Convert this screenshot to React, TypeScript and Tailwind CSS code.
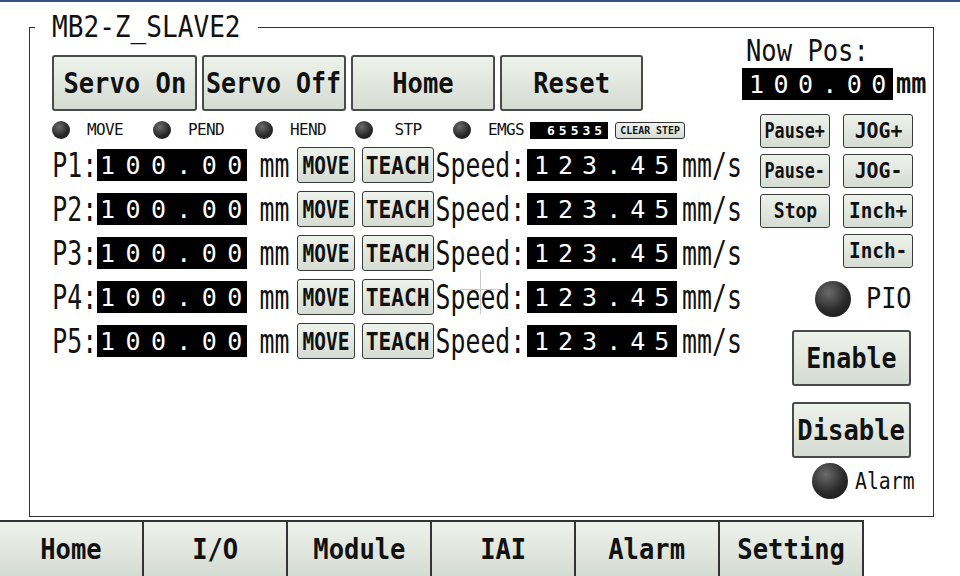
import type { ReactNode } from 'react';

function T({ s, className = '' }: { s: ReactNode; className?: string }) {
  return <span className={`inline-block shrink-0 whitespace-pre leading-none ${className}`}>{s}</span>;
}

interface IBtnProps {
  label: string;
  box: string;
  text: string;
  border?: string;
}

function Btn({ label, box, text, border = 'border-2 border-[#4a4a4a]' }: IBtnProps) {
  return (
    <button
      type="button"
      className={`flex shrink-0 items-center justify-center rounded-[3px] bg-linear-to-b from-[#eef2ec] to-[#d5dcd3] text-[#111] ${border} ${box}`}
    >
      <T s={label} className={`font-bold ${text}`} />
    </button>
  );
}

function Led({ size }: { size: string }) {
  return (
    <span
      className={`shrink-0 rounded-full bg-[radial-gradient(circle_at_38%_32%,#6b6b6b,#2a2a2a_55%,#111_100%)] ${size}`}
    />
  );
}

function Value({ v, box, text }: { v: string; box: string; text: string }) {
  return (
    <div className={`flex shrink-0 items-center bg-black text-white ${box}`}>
      <T s={v} className={text} />
    </div>
  );
}

const leds = [
  { name: 'MOVE', w: 'w-[101px]' },
  { name: 'PEND', w: 'w-[102px]' },
  { name: 'HEND', w: 'w-[100px]' },
  { name: 'STP', w: 'w-[98px]' },
];

function PosRow({ n }: { n: number }) {
  return (
    <div className="flex h-[44px] items-center">
      <div className="flex w-[45px] shrink-0 justify-center">
        <T s={`P${n}:`} className="text-[34px] scale-x-[0.73]" />
      </div>
      <Value v="100.00" box="h-[32px] w-[150px]" text="pl-[3px] text-[25px] tracking-[10.4px]" />
      <div className="flex w-[50px] shrink-0 justify-center pl-[4px]">
        <T s="mm" className="text-[34px] scale-x-[0.73]" />
      </div>
      <Btn label="MOVE" box="h-[36px] w-[58px]" text="text-[25px] scale-x-[0.78]" border="border-[1.5px] border-[#3a3a3a]" />
      <Btn label="TEACH" box="ml-[7px] h-[36px] w-[72px]" text="text-[25px] scale-x-[0.85]" border="border-[1.5px] border-[#3a3a3a]" />
      <div className="flex w-[93px] shrink-0 justify-center">
        <T s="Speed:" className="text-[34px] scale-x-[0.73]" />
      </div>
      <Value v="123.45" box="h-[32px] w-[150px]" text="pl-[7px] text-[25px] tracking-[9px]" />
      <div className="flex w-[70px] shrink-0 justify-center">
        <T s="mm/s" className="text-[34px] scale-x-[0.73]" />
      </div>
    </div>
  );
}

const tabs = ['Home', 'I/O', 'Module', 'IAI', 'Alarm', 'Setting'];

export default function App() {
  return (
    <div className="relative flex h-[576px] w-[960px] flex-col overflow-hidden bg-white font-['DejaVu_Sans_Mono',monospace] text-[#111]">
      <div className="h-[2px] bg-[#35507d]" />

      <fieldset className="ml-[29px] mt-[17px] h-[498px] w-[905px] border border-[#333]">
        <legend className="ml-[5px] h-[16px] w-[223px] pl-[17px] text-[30px] leading-[16px]">
          <span className="block origin-left whitespace-pre leading-[16px] scale-x-[0.87]">MB2-Z_SLAVE2</span>
        </legend>

        <div className="flex">
          {/* left side */}
          <div className="w-[712px] shrink-0 pl-[22px]">
            <div className="mt-[20px] flex h-[56px] gap-[5px]">
              <Btn label="Servo On" box="w-[145px]" text="text-[29px] scale-x-[0.88]" />
              <Btn label="Servo Off" box="w-[144px]" text="text-[29px] scale-x-[0.86]" />
              <Btn label="Home" box="w-[144px]" text="text-[29px] scale-x-[0.88]" />
              <Btn label="Reset" box="w-[143px]" text="text-[29px] scale-x-[0.88]" />
            </div>

            <div className="mt-[10px] flex h-[18px] items-center">
              {leds.map((l) => (
                <div key={l.name} className={`flex shrink-0 items-center ${l.w}`}>
                  <Led size="size-[18px]" />
                  <div className="ml-[9px] flex w-[52px] shrink-0 justify-center">
                    <T s={l.name} className="text-[16px] tracking-[-0.6px]" />
                  </div>
                </div>
              ))}
              <Led size="size-[18px]" />
              <div className="ml-[11px] flex w-[48px] shrink-0 justify-center">
                <T s="EMGS" className="text-[16px] tracking-[-0.6px]" />
              </div>
              <Value v="65535" box="h-[17px] w-[78px] pl-[17px]" text="text-[13px] font-bold tracking-[4px]" />
              <Btn
                label="CLEAR STEP"
                box="ml-[7px] h-[17px] w-[70px] rounded-[2px]"
                text="text-[11px] scale-x-[0.9]"
                border="border border-[#333]"
              />
            </div>

            <div className="mt-[4px]">
              {[1, 2, 3, 4, 5].map((n) => (
                <PosRow key={n} n={n} />
              ))}
            </div>
          </div>

          {/* right side */}
          <div className="w-[191px] shrink-0">
            <div className="mt-[1px] flex pl-[4px]">
              <T s="Now Pos:" className="origin-left text-[30px] scale-x-[0.85]" />
            </div>
            <div className="mt-[2px] flex items-center">
              <Value v="100.00" box="h-[32px] w-[151px]" text="pl-[7px] text-[25px] tracking-[9.4px]" />
              <T s="mm" className="ml-[3px] origin-left text-[28px] font-bold scale-x-[0.9]" />
            </div>

            <div className="mt-[14px] grid grid-cols-[70px_70px] gap-x-[13px] gap-y-[6px] pl-[18px]">
              <Btn label="Pause+" box="h-[34px]" text="text-[22px] scale-x-[0.76]" border="border-[1.5px] border-[#3a3a3a]" />
              <Btn label="JOG+" box="h-[34px]" text="text-[22px] scale-x-[0.9]" border="border-[1.5px] border-[#3a3a3a]" />
              <Btn label="Pause-" box="h-[34px]" text="text-[22px] scale-x-[0.76]" border="border-[1.5px] border-[#3a3a3a]" />
              <Btn label="JOG-" box="h-[34px]" text="text-[22px] scale-x-[0.9]" border="border-[1.5px] border-[#3a3a3a]" />
              <Btn label="Stop" box="h-[34px]" text="text-[22px] scale-x-[0.82]" border="border-[1.5px] border-[#3a3a3a]" />
              <Btn label="Inch+" box="h-[34px]" text="text-[22px] scale-x-[0.88]" border="border-[1.5px] border-[#3a3a3a]" />
              <div />
              <Btn label="Inch-" box="h-[34px]" text="text-[22px] scale-x-[0.88]" border="border-[1.5px] border-[#3a3a3a]" />
            </div>

            <div className="mt-[13px] flex h-[36px] items-center pl-[73px]">
              <Led size="size-[36px]" />
              <T s="PIO" className="ml-[15px] origin-left text-[28px] scale-x-[0.9]" />
            </div>

            <Btn label="Enable" box="ml-[50px] mt-[13px] h-[56px] w-[119px]" text="text-[29px] scale-x-[0.86]" />
            <Btn label="Disable" box="ml-[50px] mt-[16px] h-[56px] w-[119px]" text="text-[29px] scale-x-[0.88]" />

            <div className="mt-[5px] flex h-[36px] items-center pl-[70px]">
              <Led size="size-[36px]" />
              <T s="Alarm" className="ml-[7px] origin-left text-[23px] scale-x-[0.86]" />
            </div>
          </div>
        </div>
      </fieldset>

      <div className="mt-[3px] flex h-[56px]">
        {tabs.map((t) => (
          <div
            key={t}
            className="flex h-[56px] w-[144px] shrink-0 items-center justify-center border-r-2 border-t-2 border-[#333] bg-linear-to-b from-[#eef2ec] to-[#d5dcd3]"
          >
            <T s={t} className="font-bold text-[29px] scale-x-[0.88]" />
          </div>
        ))}
      </div>

      {/* touch cursor */}
      <div className="absolute left-[480px] top-[270px] h-[44px] w-px bg-[#c8c8c8]" />
      <div className="absolute left-[460px] top-[289px] h-px w-[41px] bg-[#c8c8c8]" />
    </div>
  );
}
